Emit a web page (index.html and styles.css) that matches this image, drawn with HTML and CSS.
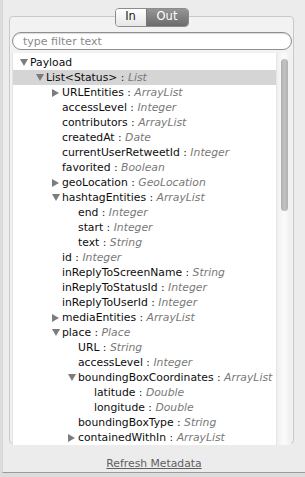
FILE: index.html
```html
<!DOCTYPE html>
<html lang="en">
<head>
    <meta charset="UTF-8">
    <title>Metadata</title>
    <link rel="stylesheet" href="styles.css">
</head>
<body>
    <div class="panel">
        <div class="group">
            <div class="seg-wrap">
                <div class="seg">
                    <span class="seg-btn">In</span>
                    <span class="seg-btn active">Out</span>
                </div>
            </div>
            <input class="filter" type="text" placeholder="type filter text">
            <div class="tree">
                <ul class="rows">
                    <li class="row l0"><i class="tw open"></i><b>Payload</b></li>
                    <li class="row l1 selected"><i class="tw open"></i><b>List&lt;Status&gt;</b>&nbsp;:&nbsp;<em>List</em></li>
                    <li class="row l2"><i class="tw closed"></i><b>URLEntities</b>&nbsp;:&nbsp;<em>ArrayList</em></li>
                    <li class="row l2"><i class="tw"></i><b>accessLevel</b>&nbsp;:&nbsp;<em>Integer</em></li>
                    <li class="row l2"><i class="tw"></i><b>contributors</b>&nbsp;:&nbsp;<em>ArrayList</em></li>
                    <li class="row l2"><i class="tw"></i><b>createdAt</b>&nbsp;:&nbsp;<em>Date</em></li>
                    <li class="row l2"><i class="tw"></i><b>currentUserRetweetId</b>&nbsp;:&nbsp;<em>Integer</em></li>
                    <li class="row l2"><i class="tw"></i><b>favorited</b>&nbsp;:&nbsp;<em>Boolean</em></li>
                    <li class="row l2"><i class="tw closed"></i><b>geoLocation</b>&nbsp;:&nbsp;<em>GeoLocation</em></li>
                    <li class="row l2"><i class="tw open"></i><b>hashtagEntities</b>&nbsp;:&nbsp;<em>ArrayList</em></li>
                    <li class="row l3"><i class="tw"></i><b>end</b>&nbsp;:&nbsp;<em>Integer</em></li>
                    <li class="row l3"><i class="tw"></i><b>start</b>&nbsp;:&nbsp;<em>Integer</em></li>
                    <li class="row l3"><i class="tw"></i><b>text</b>&nbsp;:&nbsp;<em>String</em></li>
                    <li class="row l2"><i class="tw"></i><b>id</b>&nbsp;:&nbsp;<em>Integer</em></li>
                    <li class="row l2"><i class="tw"></i><b>inReplyToScreenName</b>&nbsp;:&nbsp;<em>String</em></li>
                    <li class="row l2"><i class="tw"></i><b>inReplyToStatusId</b>&nbsp;:&nbsp;<em>Integer</em></li>
                    <li class="row l2"><i class="tw"></i><b>inReplyToUserId</b>&nbsp;:&nbsp;<em>Integer</em></li>
                    <li class="row l2"><i class="tw closed"></i><b>mediaEntities</b>&nbsp;:&nbsp;<em>ArrayList</em></li>
                    <li class="row l2"><i class="tw open"></i><b>place</b>&nbsp;:&nbsp;<em>Place</em></li>
                    <li class="row l3"><i class="tw"></i><b>URL</b>&nbsp;:&nbsp;<em>String</em></li>
                    <li class="row l3"><i class="tw"></i><b>accessLevel</b>&nbsp;:&nbsp;<em>Integer</em></li>
                    <li class="row l3"><i class="tw open"></i><b>boundingBoxCoordinates</b>&nbsp;:&nbsp;<em>ArrayList</em></li>
                    <li class="row l4"><i class="tw"></i><b>latitude</b>&nbsp;:&nbsp;<em>Double</em></li>
                    <li class="row l4"><i class="tw"></i><b>longitude</b>&nbsp;:&nbsp;<em>Double</em></li>
                    <li class="row l3"><i class="tw"></i><b>boundingBoxType</b>&nbsp;:&nbsp;<em>String</em></li>
                    <li class="row l3"><i class="tw closed"></i><b>containedWithIn</b>&nbsp;:&nbsp;<em>ArrayList</em></li>
                </ul>
                <div class="scroll-track">
                    <div class="scroll-thumb"></div>
                </div>
            </div>
        </div>
        <div class="footer">
            <a class="refresh" href="#">Refresh Metadata</a>
        </div>
    </div>
</body>
</html>
```

FILE: styles.css
```css
body,
html {
    margin: 0;
    padding: 0;
    background-color: #dcdcdc;
    font-family: "DejaVu Sans", sans-serif;
}

.panel {
    box-sizing: border-box;
    width: 304px;
    height: 473px;
    margin-left: 2px;
    background-color: #ececec;
    border-left: 1px solid #d6d6d6;
    border-right: 1px solid #a6a6a6;
    border-bottom: 1px solid #9a9a9a;
    padding-top: 16px;
}

.group {
    box-sizing: border-box;
    width: 285px;
    height: 428px;
    margin-left: 6px;
    border: 1px solid #c9c9c9;
    border-radius: 4px;
    background-color: #f2f2f2;
    padding: 0 2px;
}

.seg-wrap {
    display: flex;
    justify-content: center;
    margin-top: -9px;
}

.seg {
    display: flex;
    height: 17px;
    border: 1px solid #8c8c8c;
    border-radius: 4px;
    overflow: hidden;
    font-size: 11.5px;
    line-height: 15px;
}

.seg-btn {
    display: block;
    width: 30px;
    text-align: center;
    color: #222;
    background: linear-gradient(#ffffff, #e6e6e6);
}

.seg-btn.active {
    width: 41px;
    color: #fff;
    border-left: 1px solid #777;
    background: linear-gradient(#959595, #6c6c6c);
}

.filter {
    display: block;
    box-sizing: border-box;
    width: 280px;
    height: 18px;
    margin: 5px 0 0 0;
    padding: 0 10px;
    border: 1px solid #8f8f8f;
    border-radius: 9px;
    background-color: #fff;
    box-shadow: inset 0 1px 1px rgba(0, 0, 0, 0.15);
    font-family: "DejaVu Sans", sans-serif;
    font-size: 11px;
    outline: none;
}

.filter::placeholder {
    color: #8a8a8a;
}

.tree {
    display: flex;
    height: 392px;
    margin-top: 3px;
    background-color: #fff;
    border-left: 1px solid #e2e2e2;
}

.rows {
    flex: 1;
    list-style: none;
    margin: 0;
    padding: 2px 0 0 0;
    overflow: hidden;
}

.row {
    height: 15px;
    line-height: 15px;
    font-size: 10.8px;
    color: #222;
    white-space: nowrap;
    display: flex;
    align-items: center;
}

.row.selected {
    background-color: #d5d5d5;
}

.row b {
    font-weight: normal;
    color: #0d0d0d;
}

.row em {
    color: #787878;
}

.l0 { padding-left: 7px; }
.l1 { padding-left: 23px; }
.l2 { padding-left: 39px; }
.l3 { padding-left: 55px; }
.l4 { padding-left: 71px; }

/* triangulo de abrir/fechar */
.tw {
    display: block;
    width: 8px;
    height: 8px;
    margin-right: 2px;
    box-sizing: border-box;
}

.tw.open {
    border-left: 4px solid transparent;
    border-right: 4px solid transparent;
    border-top: 7px solid #7c7c7c;
    height: 7px;
}

.tw.closed {
    border-top: 4px solid transparent;
    border-bottom: 4px solid transparent;
    border-left: 7px solid #7c7c7c;
}

.scroll-track {
    box-sizing: border-box;
    width: 15px;
    padding: 6px 0 0 4px;
    border-left: 1px solid #e4e4e4;
    background: linear-gradient(to right, #efefef, #fbfbfb 50%, #efefef);
}

.scroll-thumb {
    width: 7px;
    height: 152px;
    border-radius: 4px;
    background: linear-gradient(to right, #b0b0b0, #c2c2c2, #b0b0b0);
}

.footer {
    text-align: center;
    margin-top: 8px;
}

.refresh {
    font-size: 10.8px;
    color: #5e5e5e;
    line-height: 14px;
    text-decoration: underline;
}
```
